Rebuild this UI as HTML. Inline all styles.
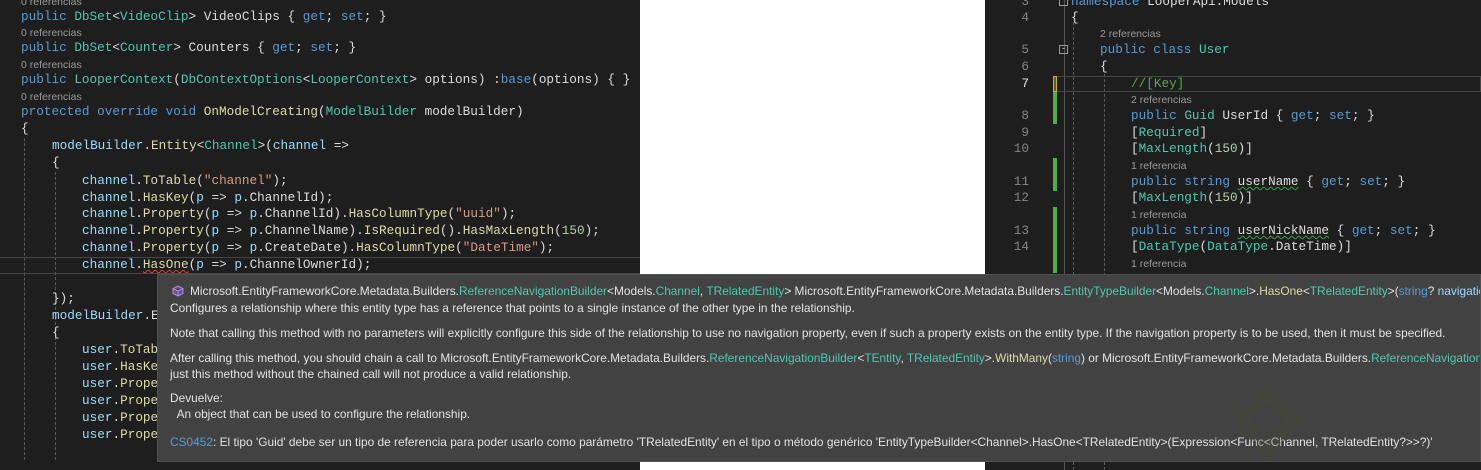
<!DOCTYPE html>
<html><head><meta charset="utf-8"><style>
*{margin:0;padding:0;box-sizing:border-box}
body{width:1481px;height:470px;background:#fff;position:relative;overflow:hidden;font-family:"Liberation Mono",monospace}
.ed{position:absolute;top:0;height:470px;background:#1e1e1e;overflow:hidden}
.l{position:absolute;white-space:pre;font-size:12.7px;line-height:16px;color:#dcdcdc;font-family:"Liberation Mono",monospace}
.r{position:absolute;white-space:pre;font-size:10.5px;line-height:12px;color:#9a9a9a;font-family:"Liberation Sans",sans-serif}
.k{color:#569cd6}.t{color:#4ec9b0}.m{color:#dcdcaa}.v{color:#9cdcfe}.s{color:#d69d85}.n{color:#b5cea8}.c{color:#57a64a}
.ln{position:absolute;width:40px;text-align:right;font-size:12.7px;line-height:16px;color:#858585;font-family:"Liberation Mono",monospace}
.g{position:absolute;border-left:1px dashed #5a5a5a;width:0}
.sq{text-decoration:underline wavy #3ca03c;text-decoration-thickness:1px}
.sqr{text-decoration:underline wavy #e04040;text-decoration-thickness:1px}
.tip{position:absolute;left:157px;top:274px;width:1324px;height:188px;background:#424242;border:1px solid #505050;font-family:"Liberation Sans",sans-serif;font-size:11.9px;color:#e2e2e2;white-space:nowrap;overflow:hidden}
.tip div{position:absolute;left:12px}
.tl{color:#4ec9b0}.tb{color:#569cd6}.tn{color:#9cdcfe}.ty{color:#dcdcaa}
</style></head><body>

<div class="ed" style="left:0;width:640px">
  <div class="g" style="left:24px;top:138px;height:332px"></div>
  <div class="g" style="left:55px;top:172px;height:298px"></div>
  <div class="g" style="left:55px;top:342px;height:128px"></div>
  <div style="position:absolute;left:0;top:257px;width:640px;height:17px;border-top:1px solid #464646;border-bottom:1px solid #464646"></div>
  <div class="r" style="left:21px;top:-4px">0 referencias</div>
  <div class="l" style="left:21px;top:9px"><span class="k">public</span> <span class="t">DbSet</span>&lt;<span class="t">VideoClip</span>&gt; VideoClips { <span class="k">get</span>; <span class="k">set</span>; }</div>
  <div class="r" style="left:21px;top:27px">0 referencias</div>
  <div class="l" style="left:21px;top:40px"><span class="k">public</span> <span class="t">DbSet</span>&lt;<span class="t">Counter</span>&gt; Counters { <span class="k">get</span>; <span class="k">set</span>; }</div>
  <div class="r" style="left:21px;top:59px">0 referencias</div>
  <div class="l" style="left:21px;top:72px"><span class="k">public</span> <span class="t">LooperContext</span>(<span class="t">DbContextOptions</span>&lt;<span class="t">LooperContext</span>&gt; <span style="color:#dcdcdc">options</span>) :<span class="k">base</span>(options) { }</div>
  <div class="r" style="left:21px;top:91px">0 referencias</div>
  <div class="l" style="left:21px;top:104px"><span class="k">protected override void</span> <span class="m">OnModelCreating</span>(<span class="t">ModelBuilder</span> modelBuilder)</div>
  <div class="l" style="left:21px;top:121px">{</div>
  <div class="l" style="left:52px;top:138px"><span class="v">modelBuilder</span>.<span class="m">Entity</span>&lt;<span class="t">Channel</span>&gt;(<span class="v">channel</span> =&gt;</div>
  <div class="l" style="left:52px;top:155px">{</div>
  <div class="l" style="left:82px;top:173px"><span class="v">channel</span>.<span class="m">ToTable</span>(<span class="s">"channel"</span>);</div>
  <div class="l" style="left:82px;top:190px"><span class="v">channel</span>.<span class="m">HasKey</span>(<span class="v">p</span> =&gt; <span class="v">p</span>.ChannelId);</div>
  <div class="l" style="left:82px;top:206px"><span class="v">channel</span>.<span class="m">Property</span>(<span class="v">p</span> =&gt; <span class="v">p</span>.ChannelId).<span class="m">HasColumnType</span>(<span class="s">"uuid"</span>);</div>
  <div class="l" style="left:82px;top:223px"><span class="v">channel</span>.<span class="m">Property</span>(<span class="v">p</span> =&gt; <span class="v">p</span>.ChannelName).<span class="m">IsRequired</span>().<span class="m">HasMaxLength</span>(<span class="n">150</span>);</div>
  <div class="l" style="left:82px;top:240px"><span class="v">channel</span>.<span class="m">Property</span>(<span class="v">p</span> =&gt; <span class="v">p</span>.CreateDate).<span class="m">HasColumnType</span>(<span class="s">"DateTime"</span>);</div>
  <div class="l" style="left:82px;top:257px"><span class="v">channel</span>.<span class="m sqr">HasOne</span>(<span class="v">p</span> =&gt; <span class="v">p</span>.ChannelOwnerId);</div>
  <div class="l" style="left:52px;top:291px">});</div>
  <div class="l" style="left:52px;top:308px"><span class="v">modelBuilder</span>.E</div>
  <div class="l" style="left:52px;top:325px">{</div>
  <div class="l" style="left:82px;top:342px"><span class="v">user</span>.<span class="m">ToTab</span></div>
  <div class="l" style="left:82px;top:359px"><span class="v">user</span>.<span class="m">HasKe</span></div>
  <div class="l" style="left:82px;top:376px"><span class="v">user</span>.<span class="m">Prope</span></div>
  <div class="l" style="left:82px;top:393px"><span class="v">user</span>.<span class="m">Prope</span></div>
  <div class="l" style="left:82px;top:410px"><span class="v">user</span>.<span class="m">Prope</span></div>
  <div class="l" style="left:82px;top:427px"><span class="v">user</span>.<span class="m">Prope</span></div>
</div>

<div class="ed" style="left:985px;width:496px">
  <div style="position:absolute;left:79px;top:0;width:1px;height:470px;background:#555"></div>
  <div class="g" style="left:88px;top:22px;height:448px"></div>
  <div class="g" style="left:119px;top:74px;height:396px"></div>
  <div style="position:absolute;left:68px;top:76px;width:428px;height:16px;border:1px solid #464646"></div>
  <div style="position:absolute;left:68px;top:76px;width:4px;height:16px;background:#6b5a1e;border:1px solid #c8b030"></div>
  <div style="position:absolute;left:68px;top:92px;width:4px;height:32px;background:#4cae4c"></div>
  <div style="position:absolute;left:68px;top:158px;width:4px;height:33px;background:#4cae4c"></div>
  <div style="position:absolute;left:68px;top:207px;width:4px;height:66px;background:#4cae4c"></div>
  <div style="position:absolute;left:74px;top:-3px;width:9px;height:9px;border:1px solid #999"></div>
  <div style="position:absolute;left:74px;top:45px;width:9px;height:9px;border:1px solid #999;font-size:9px;line-height:6px;color:#ccc;text-align:center">-</div>
  <div class="ln" style="left:4px;top:-6px">3</div>
  <div class="ln" style="left:4px;top:10px">4</div>
  <div class="ln" style="left:4px;top:42px">5</div>
  <div class="ln" style="left:4px;top:59px">6</div>
  <div class="ln" style="left:4px;top:76px;color:#e8e8e8">7</div>
  <div class="ln" style="left:4px;top:108px">8</div>
  <div class="ln" style="left:4px;top:125px">9</div>
  <div class="ln" style="left:4px;top:141px">10</div>
  <div class="ln" style="left:4px;top:174px">11</div>
  <div class="ln" style="left:4px;top:190px">12</div>
  <div class="ln" style="left:4px;top:223px">13</div>
  <div class="ln" style="left:4px;top:239px">14</div>
  <div class="l" style="left:86px;top:-6px"><span class="k">namespace</span> LooperApi.Models</div>
  <div class="l" style="left:86px;top:10px">{</div>
  <div class="r" style="left:115px;top:28px">2 referencias</div>
  <div class="l" style="left:115px;top:42px"><span class="k">public class</span> <span class="t">User</span></div>
  <div class="l" style="left:115px;top:59px">{</div>
  <div class="l" style="left:146px;top:76px"><span class="c">//[Key]</span></div>
  <div class="r" style="left:146px;top:94px">2 referencias</div>
  <div class="l" style="left:146px;top:108px"><span class="k">public</span> <span class="t">Guid</span> UserId { <span class="k">get</span>; <span class="k">set</span>; }</div>
  <div class="l" style="left:146px;top:125px">[<span class="t">Required</span>]</div>
  <div class="l" style="left:146px;top:141px">[<span class="t">MaxLength</span>(<span class="n">150</span>)]</div>
  <div class="r" style="left:146px;top:160px">1 referencia</div>
  <div class="l" style="left:146px;top:174px"><span class="k">public string</span> <span class="sq">userName</span> { <span class="k">get</span>; <span class="k">set</span>; }</div>
  <div class="l" style="left:146px;top:190px">[<span class="t">MaxLength</span>(<span class="n">150</span>)]</div>
  <div class="r" style="left:146px;top:209px">1 referencia</div>
  <div class="l" style="left:146px;top:223px"><span class="k">public string</span> <span class="sq">userNickName</span> { <span class="k">get</span>; <span class="k">set</span>; }</div>
  <div class="l" style="left:146px;top:239px">[<span class="t">DataType</span>(<span class="t">DataType</span>.DateTime)]</div>
  <div class="r" style="left:146px;top:258px">1 referencia</div>
</div>

<div style="position:absolute;left:0;top:462px;width:640px;height:8px;background:#1e1e1e"></div>

<div class="tip">
  <svg style="position:absolute;left:14px;top:10px" width="12" height="12" viewBox="0 0 12 12"><path d="M6 1 L11 3.5 V8.5 L6 11 L1 8.5 V3.5 Z M1 3.5 L6 6 L11 3.5 M6 6 V11" fill="#6c4f9a" stroke="#b48ee0" stroke-width="1"/></svg>
  <div style="left:32px;top:9px">Microsoft.EntityFrameworkCore.Metadata.Builders.<span class="tl">ReferenceNavigationBuilder</span>&lt;Models.<span class="tl">Channel</span>, <span class="tl">TRelatedEntity</span>&gt; Microsoft.EntityFrameworkCore.Metadata.Builders.<span class="tl">EntityTypeBuilder</span>&lt;Models.<span class="tl">Channel</span>&gt;.<span class="ty">HasOne</span>&lt;<span class="tl">TRelatedEntity</span>&gt;(<span class="tb">string</span>? <span class="tn">navigationName</span>)</div>
  <div style="top:26px">Configures a relationship where this entity type has a reference that points to a single instance of the other type in the relationship.</div>
  <div style="top:51px">Note that calling this method with no parameters will explicitly configure this side of the relationship to use no navigation property, even if such a property exists on the entity type. If the navigation property is to be used, then it must be specified.</div>
  <div style="top:76px">After calling this method, you should chain a call to Microsoft.EntityFrameworkCore.Metadata.Builders.<span class="tl">ReferenceNavigationBuilder</span>&lt;<span class="tl">TEntity</span>, <span class="tl">TRelatedEntity</span>&gt;.<span class="ty">WithMany</span>(<span class="tb">string</span>) or Microsoft.EntityFrameworkCore.Metadata.Builders.<span class="tl">ReferenceNavigationBuilder</span></div>
  <div style="top:92px">just this method without the chained call will not produce a valid relationship.</div>
  <div style="top:116px">Devuelve:</div>
  <div style="top:132px">&nbsp;&nbsp;An object that can be used to configure the relationship.</div>
  <div style="top:160px"><span class="tb">CS0452</span>: El tipo 'Guid' debe ser un tipo de referencia para poder usarlo como parámetro 'TRelatedEntity' en el tipo o método genérico 'EntityTypeBuilder&lt;Channel&gt;.HasOne&lt;TRelatedEntity&gt;(Expression&lt;Func&lt;Channel, TRelatedEntity?&gt;&gt;?)'</div>
  <svg style="position:absolute;left:1070px;top:105px" width="80" height="85" viewBox="0 0 80 85"><path d="M40 5 L75 40 L40 80 L5 40 Z M40 22 L58 40 L40 60 L22 40 Z" fill="#4a4a38" fill-rule="evenodd" opacity="0.3"/></svg>
</div>
</body></html>
